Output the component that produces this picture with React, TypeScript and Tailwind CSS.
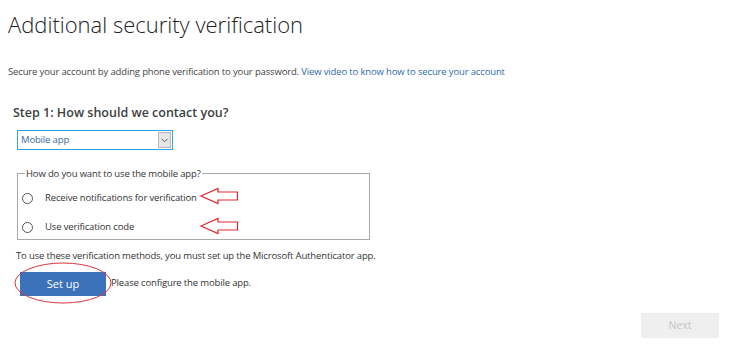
import React from 'react';

const font = { fontFamily: '"Open Sans", "Noto Sans", sans-serif' };

const Arrow = ({ top }: { top: number }) => (
  <svg
    width="40"
    height="18"
    viewBox="0 0 40 18"
    className="absolute left-[182px] pointer-events-none"
    style={{ top }}
  >
    <path d="M1 9 L18 1.5 L18 5 L37.5 5 L37.5 13 L18 13 L18 16.5 Z" fill="none" stroke="#e0282e" strokeWidth="1.2" />
  </svg>
);

const RadioRow = ({ label }: { label: string }) => (
  <label className="flex items-center h-[20px]">
    <span className="w-[11px] h-[11px] rounded-full border border-[#555] bg-white ml-[4px] mr-[12px] shrink-0" />
    <span className="text-[9.5px] tracking-[-0.15px] text-[#333]">{label}</span>
  </label>
);

export default function App() {
  return (
    <div className="w-[740px] h-[354px] bg-white text-[#333] overflow-hidden" style={font}>
      <div className="pl-[8px] pt-[8px]">
        <h1 className="text-[22px] font-light leading-[32px] text-[#222]">
          Additional security verification
        </h1>
        <p className="mt-[25px] text-[9.5px] tracking-[-0.15px] leading-[14px] text-[#444]">
          Secure your account by adding phone verification to your password.{' '}
          <a className="text-[#2c6aae]">View video to know how to secure your account</a>
        </p>
      </div>

      <div className="pl-[13px] mt-[25px]">
        <h2 className="text-[12.5px] font-semibold leading-[18px] text-[#404040]">
          Step 1: How should we contact you?
        </h2>
      </div>

      <div className="pl-[17px]">
        <div className="mt-[8px] w-[156px] h-[20px] border border-[#2aa4df] flex items-center justify-between bg-white">
          <span className="pl-[3px] text-[9.5px] tracking-[-0.15px] text-[#3a6a9c]">Mobile app</span>
          <span className="w-[13px] h-[16px] mr-[1px] bg-[#e6e6e6] border border-[#b8b8b8] flex items-center justify-center">
            <svg width="7" height="5" viewBox="0 0 7 5">
              <path d="M0.5 0.8 L3.5 3.8 L6.5 0.8" fill="none" stroke="#555" strokeWidth="1" />
            </svg>
          </span>
        </div>

        <fieldset className="relative mt-[17px] w-[353px] h-[73px] border border-[#a9a9a9] pl-0 pt-[2px]">
          <legend className="ml-[7px] px-[1px] text-[9.5px] tracking-[-0.15px] leading-[13px] text-[#333]">
            How do you want to use the mobile app?
          </legend>
          <div className="flex flex-col gap-[9px] pt-[6px]">
            <RadioRow label="Receive notifications for verification" />
            <RadioRow label="Use verification code" />
          </div>
          <Arrow top={7} />
          <Arrow top={37} />
        </fieldset>

        <p className="mt-[9px] text-[9.5px] tracking-[-0.15px] leading-[14px] text-[#333] -ml-[1px]">
          To use these verification methods, you must set up the Microsoft Authenticator app.
        </p>

        <div className="mt-[7px] flex items-center">
          <div className="relative ml-[3px]">
            <button className="w-[86px] h-[24px] bg-[#3b72b9] text-white text-[11px]">Set up</button>
            <svg className="absolute left-[-7px] top-[-8px] pointer-events-none" width="100" height="42" viewBox="0 0 100 42">
              <ellipse cx="50" cy="21" rx="48" ry="20" fill="none" stroke="#d9363e" strokeWidth="1" />
            </svg>
          </div>
          <span className="ml-[5px] text-[9.5px] tracking-[-0.15px] text-[#333]">Please configure the mobile app.</span>
        </div>
      </div>

      <div className="flex justify-end pr-[21px] mt-[17px]">
        <button className="w-[78px] h-[25px] bg-[#efefef] text-[#c4c4c4] text-[10.5px]">Next</button>
      </div>
    </div>
  );
}
